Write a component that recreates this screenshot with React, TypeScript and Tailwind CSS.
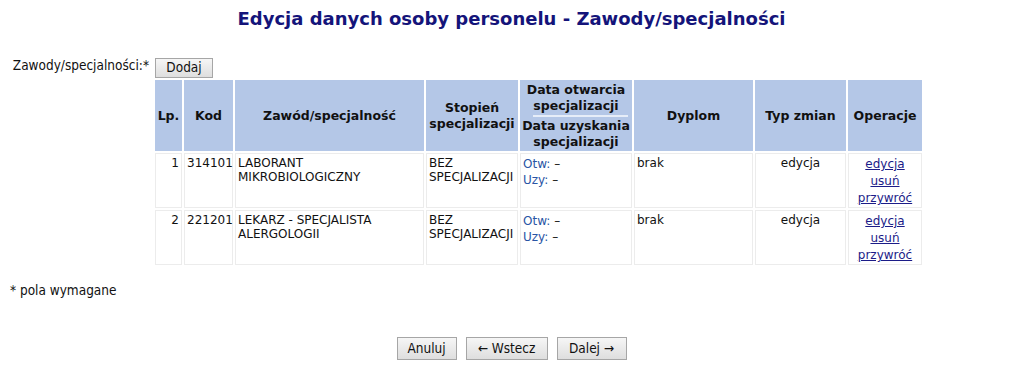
import React from "react";

const rows = [
  { lp: 1, kod: "314101", zawod: ["LABORANT", "MIKROBIOLOGICZNY"] },
  { lp: 2, kod: "221201", zawod: ["LEKARZ - SPECJALISTA", "ALERGOLOGII"] },
];

function Btn({ children, className = "" }: { children: React.ReactNode; className?: string }) {
  return (
    <button
      className={
        "border border-[#a6a6a6] bg-gradient-to-b from-[#f6f6f6] to-[#dedede] text-[13.5px] text-[#111] font-['DejaVu_Sans_Condensed','DejaVu_Sans',sans-serif] leading-none " +
        className
      }
    >
      {children}
    </button>
  );
}

export default function App() {
  const th = "bg-[#b4c7e7] font-bold text-[12.5px] leading-[16px] text-[#111] text-center align-middle p-0";
  const td = "border border-[#ececec] align-top text-[12px] leading-[14px] text-[#111] px-[2px] pt-[2px]";
  return (
    <div className="w-[1023px] h-[373px] bg-white font-['DejaVu_Sans',sans-serif] text-[#111] overflow-hidden">
      <h1 className="text-center font-bold text-[18px] leading-[22px] text-[#14147a] pt-[8px]">
        Edycja danych osoby personelu - Zawody/specjalności
      </h1>
      <div className="flex mt-[28px]">
        <div className="w-[153px] shrink-0 text-right pr-[4px] pt-[0px] text-[13.5px] leading-[14px] font-['DejaVu_Sans_Condensed','DejaVu_Sans',sans-serif] text-[#111]">
          Zawody/specjalności:*
        </div>
        <div className="flex flex-col items-start">
          <Btn className="ml-[2px] w-[58px] h-[20px]">Dodaj</Btn>
          <table className="border-separate border-spacing-[2px] table-fixed w-[771px] mt-0">
            <colgroup>
              <col className="w-[27px]" />
              <col className="w-[49px]" />
              <col className="w-[189px]" />
              <col className="w-[92px]" />
              <col className="w-[112px]" />
              <col className="w-[119px]" />
              <col className="w-[91px]" />
              <col className="w-[74px]" />
            </colgroup>
            <thead>
              <tr className="h-[71px]">
                <th className={th}>Lp.</th>
                <th className={th}>Kod</th>
                <th className={th}>Zawód/specjalność</th>
                <th className={th}>
                  Stopień
                  <br />
                  specjalizacji
                </th>
                <th className={th + " align-top"}>
                  <div className="h-[35px] pt-[2px]">
                    Data otwarcia
                    <br />
                    specjalizacji
                  </div>
                  <div className="ml-[13px] mr-[4px] h-[2px] bg-[#e6edf8]" />
                  <div className="pt-[1px]">
                    Data uzyskania
                    <br />
                    specjalizacji
                  </div>
                </th>
                <th className={th}>Dyplom</th>
                <th className={th}>Typ zmian</th>
                <th className={th}>Operacje</th>
              </tr>
            </thead>
            <tbody>
              {rows.map((r) => (
                <tr key={r.lp}>
                  <td className={td + " text-right"}>{r.lp}</td>
                  <td className={td}>{r.kod}</td>
                  <td className={td}>
                    {r.zawod[0]}
                    <br />
                    {r.zawod[1]}
                  </td>
                  <td className={td + " pr-0"}>
                    BEZ
                    <br />
                    SPECJALIZACJI
                  </td>
                  <td className={td + " pt-[1px]"}>
                    <div className="leading-[16px]">
                      <span className="text-[#2a55a5]">Otw:</span> –
                    </div>
                    <div className="leading-[16px]">
                      <span className="text-[#2a55a5]">Uzy:</span> –
                    </div>
                  </td>
                  <td className={td}>brak</td>
                  <td className={td + " text-center"}>edycja</td>
                  <td className={td + " text-center pt-[2px] pb-0"}>
                    <a className="block leading-[17px] underline text-[#1c1c88]" href="#">
                      edycja
                    </a>
                    <a className="block leading-[17px] underline text-[#1c1c88]" href="#">
                      usuń
                    </a>
                    <a className="block leading-[17px] underline text-[#1c1c88]" href="#">
                      przywróć
                    </a>
                  </td>
                </tr>
              ))}
            </tbody>
          </table>
        </div>
      </div>
      <p className="mt-[16px] pl-[10px] text-[13.5px] leading-[14px] font-['DejaVu_Sans_Condensed','DejaVu_Sans',sans-serif] text-[#111]">
        * pola wymagane
      </p>
      <div className="flex justify-center gap-[9px] mt-[40px]">
        <Btn className="w-[60px] h-[23px]">Anuluj</Btn>
        <Btn className="w-[82px] h-[23px]">← Wstecz</Btn>
        <Btn className="w-[70px] h-[23px]">Dalej →</Btn>
      </div>
    </div>
  );
}
